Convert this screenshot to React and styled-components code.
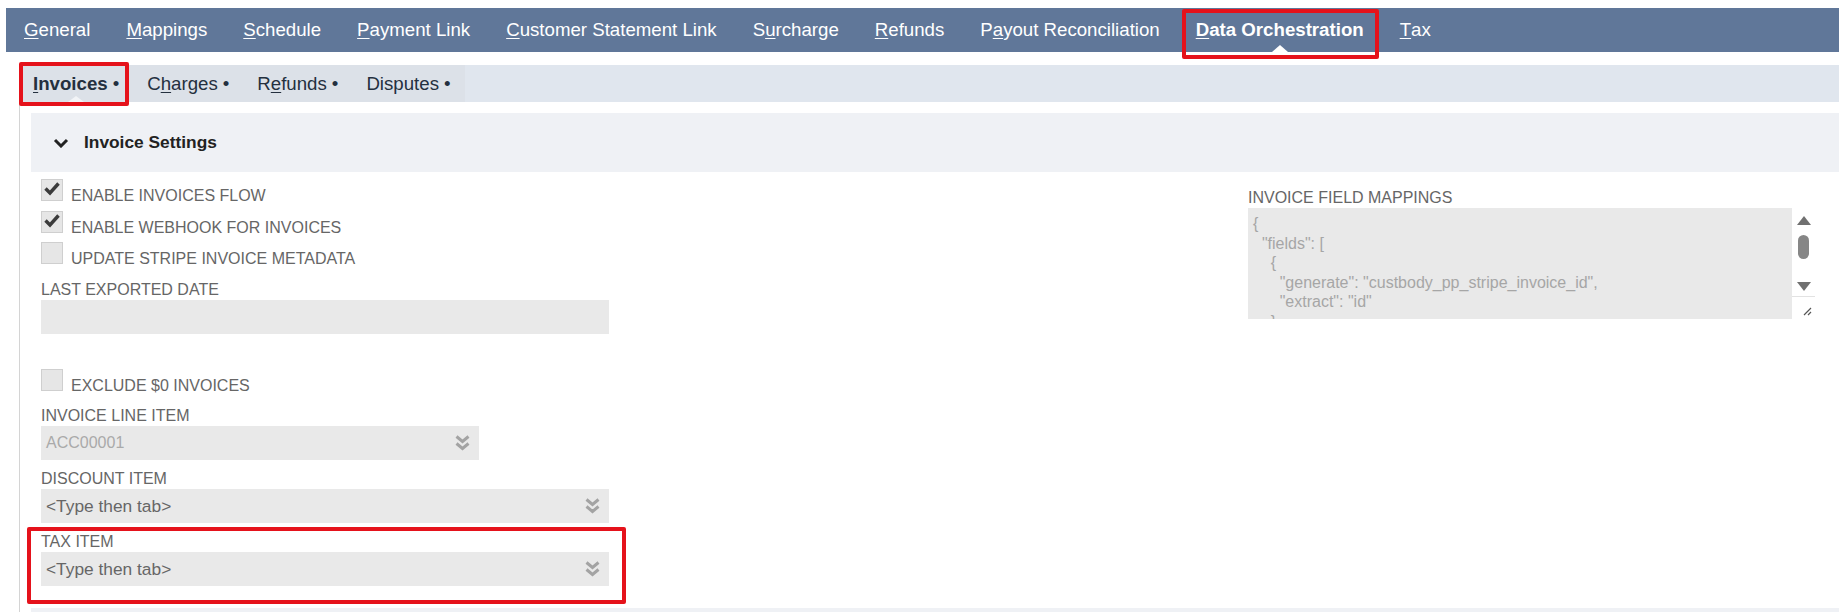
import React from "react";
import styled, { createGlobalStyle, css } from "styled-components";

const GlobalStyle = createGlobalStyle`
  html, body {
    margin: 0;
    padding: 0;
    background: #fff;
  }
  body {
    font-family: "Liberation Sans", Arial, sans-serif;
    color: #222;
  }
  * {
    box-sizing: border-box;
  }
`;

// red annotation frame drawn over a part of the page
const redMark = css`
  &::after {
    content: "";
    position: absolute;
    inset: ${(p) => p.$mark};
    border: 4px solid #e5121b;
    border-radius: 2px;
    pointer-events: none;
  }
`;

const Page = styled.div`
  padding: 8px 0 0 6px;
`;

const NavBar = styled.nav`
  display: flex;
  height: 44px;
  background: #607799;
`;

const NavItem = styled.a`
  position: relative;
  display: flex;
  align-items: center;
  padding: 0 18px;
  color: #fff;
  font-size: 18.67px;
  text-decoration: none;
  white-space: nowrap;
  ${(p) =>
    p.$active &&
    css`
      font-weight: bold;
      &::before {
        content: "";
        position: absolute;
        bottom: 0;
        left: 50%;
        margin-left: -8px;
        border-left: 8px solid transparent;
        border-right: 8px solid transparent;
        border-bottom: 7px solid #fff;
      }
    `}
  ${(p) => p.$mark && redMark}
`;

const Key = styled.u`
  text-underline-offset: 2px;
`;

const SubBar = styled.div`
  display: flex;
  height: 37px;
  margin: 13px 0 0 13px;
  background: #e0e6ee;
`;

const SubTabs = styled.div`
  display: flex;
  background: #dce1e8;
`;

const SubTab = styled.a`
  position: relative;
  display: flex;
  align-items: center;
  padding: 0 14px;
  font-size: 18.67px;
  color: #24303f;
  white-space: nowrap;
  ${(p) =>
    p.$active &&
    css`
      font-weight: bold;
      &::before {
        content: "";
        position: absolute;
        bottom: 0;
        left: 50%;
        margin-left: -8px;
        border-left: 8px solid transparent;
        border-right: 8px solid transparent;
        border-bottom: 6px solid #f2f4f7;
      }
    `}
  ${(p) => p.$mark && redMark}
`;

const Dot = styled.span`
  margin-left: 5px;
  font-weight: normal;
`;

const Content = styled.div`
  margin-left: 13px;
  border-left: 1px solid #d4d4d4;
  padding: 11px 0 0 11px;
`;

const SectionHeader = styled.div`
  display: flex;
  align-items: center;
  gap: 15px;
  height: 59px;
  padding-left: 22px;
  margin-top: ${(p) => p.$gap || 0}px;
  background: #eff1f5;
  font-size: 17.33px;
  font-weight: bold;
  color: #222;
`;

const Fields = styled.div`
  display: flex;
  justify-content: space-between;
  padding: 0 24px 0 10px;
`;

const LeftCol = styled.div`
  width: 568px;
  padding-top: 7px;
`;

const RightCol = styled.div`
  width: 567px;
  padding-top: 16px;
`;

const CheckRow = styled.div`
  display: flex;
  align-items: baseline;
  gap: 8px;
  margin-top: ${(p) => p.$top || 0}px;
  margin-bottom: 4.5px;
`;

const Box = styled.span`
  display: inline-block;
  flex: none;
  width: 22px;
  height: 22px;
  background: #e6e6e6;
  border: 1px solid #cfcfcf;
  position: relative;
  svg {
    position: absolute;
    left: 0;
    top: 0;
  }
`;

const Label = styled.div`
  font-size: 16px;
  line-height: 20px;
  color: #666;
  white-space: nowrap;
`;

const Field = styled.div`
  position: relative;
  width: ${(p) => p.$width}px;
  margin-top: ${(p) => p.$top || 0}px;
  ${(p) => p.$mark && redMark}
`;

const InputBox = styled.div`
  height: 34px;
  background: #e9e9e9;
`;

const Select = styled.div`
  display: flex;
  align-items: center;
  justify-content: space-between;
  height: 34px;
  padding: 0 8px 0 5px;
  background: #e9e9e9;
  font-size: ${(p) => (p.$muted ? 16 : 17.33)}px;
  color: ${(p) => (p.$muted ? "#aaa" : "#666")};
  white-space: nowrap;
`;

const TextArea = styled.div`
  display: flex;
  height: 111px;
`;

const Code = styled.pre`
  flex: 1;
  margin: 0;
  padding: 6px 0 0 5px;
  overflow: hidden;
  background: #e9e9e9;
  font-family: "Liberation Sans", Arial, sans-serif;
  font-size: 16px;
  line-height: 19.5px;
  color: #a6a6a6;
`;

const ScrollCol = styled.div`
  display: flex;
  flex-direction: column;
  width: 23px;
  background: #fff;
`;

const Track = styled.div`
  display: flex;
  flex-direction: column;
  align-items: center;
  flex: 1;
  padding-top: 8px;
`;

const Arrow = styled.span`
  width: 0;
  height: 0;
  margin-top: ${(p) => p.$top || 0}px;
  border-left: 7px solid transparent;
  border-right: 7px solid transparent;
  ${(p) =>
    p.$down
      ? css`
          border-top: 9px solid #707070;
        `
      : css`
          border-bottom: 9px solid #707070;
        `}
`;

const Thumb = styled.span`
  width: 11px;
  height: 24px;
  margin-top: 10px;
  border-radius: 6px;
  background: #868686;
`;

const Grip = styled.div`
  height: 23px;
  border-top: 1px solid #e2e2e2;
  display: flex;
  align-items: flex-end;
  justify-content: flex-end;
  padding: 0 3px 3px 0;
`;

const Check = () => (
  <svg width="22" height="22" viewBox="0 0 22 22">
    <path
      d="M3.5 8.5 L8 13 L16.5 3.5"
      fill="none"
      stroke="#3b3b3b"
      strokeWidth="3.4"
      strokeLinejoin="miter"
    />
  </svg>
);

const Chevron = () => (
  <svg width="16" height="10" viewBox="0 0 16 10">
    <path d="M2 2 L8 8 L14 2" fill="none" stroke="#222" strokeWidth="3" />
  </svg>
);

const DoubleChevron = () => (
  <svg width="17" height="16" viewBox="0 0 17 16">
    <path
      d="M2.5 1.5 L8.5 6.5 L14.5 1.5 M2.5 8.5 L8.5 13.5 L14.5 8.5"
      fill="none"
      stroke="#a3a3a3"
      strokeWidth="3"
    />
  </svg>
);

const GripIcon = () => (
  <svg width="10" height="10" viewBox="0 0 10 10">
    <path d="M9 2 L2 9 M9 6 L6 9" stroke="#555" strokeWidth="1.2" />
  </svg>
);

const withKey = (label, k) =>
  k < 0 ? (
    label
  ) : (
    <>
      {label.slice(0, k)}
      <Key>{label[k]}</Key>
      {label.slice(k + 1)}
    </>
  );

const tabs = [
  { label: "General", k: 0 },
  { label: "Mappings", k: 0 },
  { label: "Schedule", k: 0 },
  { label: "Payment Link", k: 0 },
  { label: "Customer Statement Link", k: 0 },
  { label: "Surcharge", k: 1 },
  { label: "Refunds", k: 0 },
  { label: "Payout Reconciliation", k: 1 },
  { label: "Data Orchestration", k: 0, active: true, mark: "1px 3px -7px 4px" },
  { label: "Tax", k: 0 },
];

const subTabs = [
  { label: "Invoices", k: 0, active: true, mark: "-3px 4px -4px 0" },
  { label: "Charges", k: 1 },
  { label: "Refunds", k: 1 },
  { label: "Disputes", k: -1 },
];

const mappings = `{
  "fields": [
    {
      "generate": "custbody_pp_stripe_invoice_id",
      "extract": "id"
    },
    {`;

function CheckField({ checked, label, top }) {
  return (
    <CheckRow $top={top}>
      <Box>{checked && <Check />}</Box>
      <Label>{label}</Label>
    </CheckRow>
  );
}

function SelectField({ label, value, muted, width, top, mark }) {
  return (
    <Field $width={width} $top={top} $mark={mark}>
      <Label>{label}</Label>
      <Select $muted={muted}>
        <span>{value}</span>
        <DoubleChevron />
      </Select>
    </Field>
  );
}

export default function App() {
  return (
    <Page>
      <GlobalStyle />
      <NavBar>
        {tabs.map((t) => (
          <NavItem key={t.label} $active={t.active} $mark={t.mark}>
            {withKey(t.label, t.k)}
          </NavItem>
        ))}
      </NavBar>

      <SubBar>
        <SubTabs>
          {subTabs.map((t) => (
            <SubTab key={t.label} $active={t.active} $mark={t.mark}>
              {withKey(t.label, t.k)}
              <Dot>•</Dot>
            </SubTab>
          ))}
        </SubTabs>
      </SubBar>

      <Content>
        <SectionHeader>
          <Chevron />
          Invoice Settings
        </SectionHeader>

        <Fields>
          <LeftCol>
            <CheckField checked label="ENABLE INVOICES FLOW" />
            <CheckField checked label="ENABLE WEBHOOK FOR INVOICES" />
            <CheckField label="UPDATE STRIPE INVOICE METADATA" />

            <Field $width={568} $top={11}>
              <Label>LAST EXPORTED DATE</Label>
              <InputBox />
            </Field>

            <CheckField label="EXCLUDE $0 INVOICES" top={35} />

            <SelectField
              label="INVOICE LINE ITEM"
              value="ACC00001"
              muted
              width={438}
              top={10}
            />
            <SelectField
              label="DISCOUNT ITEM"
              value="<Type then tab>"
              width={568}
              top={9}
            />
            <SelectField
              label="TAX ITEM"
              value="<Type then tab>"
              width={568}
              top={9}
              mark="-5px -17px -18px -14px"
            />
          </LeftCol>

          <RightCol>
            <Label>INVOICE FIELD MAPPINGS</Label>
            <TextArea>
              <Code>{mappings}</Code>
              <ScrollCol>
                <Track>
                  <Arrow />
                  <Thumb />
                  <Arrow $down $top={23} />
                </Track>
                <Grip>
                  <GripIcon />
                </Grip>
              </ScrollCol>
            </TextArea>
          </RightCol>
        </Fields>

        <SectionHeader $gap={22} />
      </Content>
    </Page>
  );
}
